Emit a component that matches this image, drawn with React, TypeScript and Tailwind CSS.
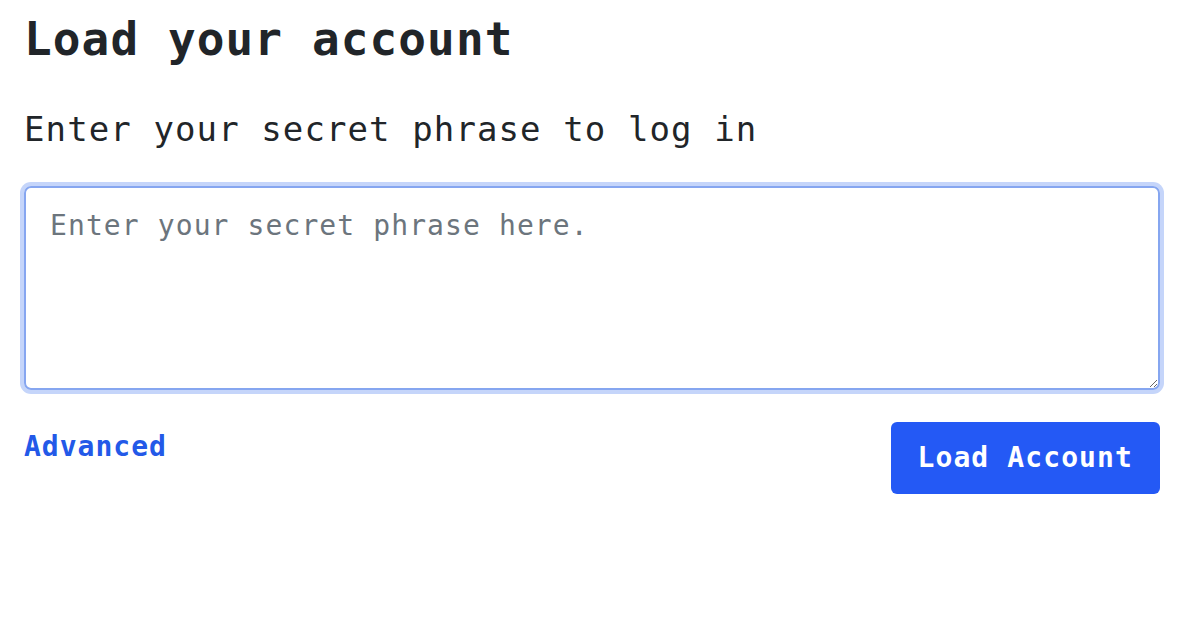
import { useState } from "react";

const mono = "font-['DejaVu_Sans_Mono','Liberation_Mono',monospace]";

export default function App() {
  const [phrase, setPhrase] = useState("");

  return (
    <div className={`${mono} pl-6 pr-[26px] pt-[9px] text-[#212529] bg-white min-h-screen`}>
      <h1 className="text-[46px] leading-[60px] font-bold tracking-[1.1px]">Load your account</h1>
      <p className="mt-[37px] text-[34px] leading-[46px] tracking-[1.1px]">Enter your secret phrase to log in</p>

      <textarea
        value={phrase}
        onChange={(e) => setPhrase(e.target.value)}
        placeholder="Enter your secret phrase here."
        className="mt-[34px] block w-full h-[204px] rounded-[7px] border-2 border-[#86a6f0] ring-4 ring-[#c5d5fa] outline-none px-6 pt-[18px] pb-[14px] text-[28px] leading-[40px] tracking-[1.1px] placeholder:text-[#6c757d]"
      />

      <div className="mt-[32px] flex items-start justify-between">
        <a href="#" className="pt-[3px] text-[28px] leading-[44px] font-bold tracking-[1px] text-[#2359e8]">
          Advanced
        </a>
        <button className="h-[72px] px-[27px] rounded-[6px] bg-[#2459f5] text-white text-[28px] font-bold tracking-[1.1px]">
          Load Account
        </button>
      </div>
    </div>
  );
}
